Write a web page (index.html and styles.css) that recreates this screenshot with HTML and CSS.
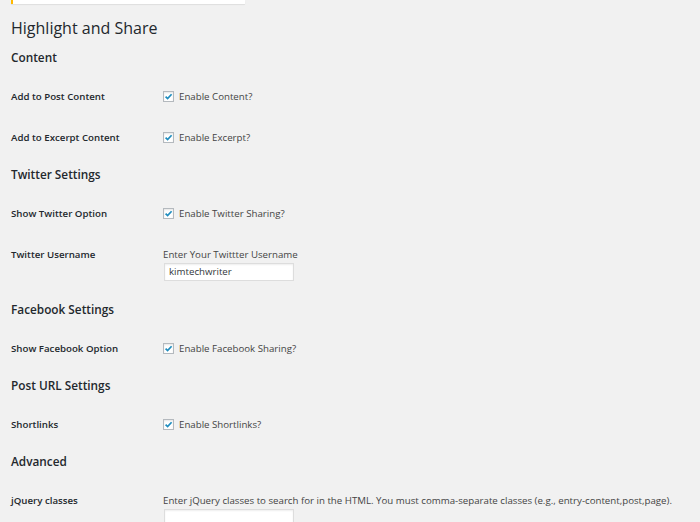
FILE: index.html
```html
<!DOCTYPE html>
<html>
<head>
<meta charset="utf-8">
<link rel="stylesheet" href="styles.css">
</head>
<body>
<div class="wrap">
  <div class="notice"></div>
  <h1 class="title">Highlight and Share</h1>

  <h2 class="section">Content</h2>
  <div class="row">
    <div class="th">Add to Post Content</div>
    <div class="td"><label class="check"><span class="cb"><svg viewBox="0 0 9 9"><path d="M1.6 4.6 L3.6 6.6 L7.6 2.2" /></svg></span>Enable Content?</label></div>
  </div>
  <div class="row">
    <div class="th">Add to Excerpt Content</div>
    <div class="td"><label class="check"><span class="cb"><svg viewBox="0 0 9 9"><path d="M1.6 4.6 L3.6 6.6 L7.6 2.2" /></svg></span>Enable Excerpt?</label></div>
  </div>

  <h2 class="section">Twitter Settings</h2>
  <div class="row">
    <div class="th">Show Twitter Option</div>
    <div class="td"><label class="check"><span class="cb"><svg viewBox="0 0 9 9"><path d="M1.6 4.6 L3.6 6.6 L7.6 2.2" /></svg></span>Enable Twitter Sharing?</label></div>
  </div>
  <div class="row row-input">
    <div class="th">Twitter Username</div>
    <div class="td">
      <div class="desc">Enter Your Twittter Username</div>
      <div class="input">kimtechwriter</div>
    </div>
  </div>

  <h2 class="section">Facebook Settings</h2>
  <div class="row">
    <div class="th">Show Facebook Option</div>
    <div class="td"><label class="check"><span class="cb"><svg viewBox="0 0 9 9"><path d="M1.6 4.6 L3.6 6.6 L7.6 2.2" /></svg></span>Enable Facebook Sharing?</label></div>
  </div>

  <h2 class="section">Post URL Settings</h2>
  <div class="row">
    <div class="th">Shortlinks</div>
    <div class="td"><label class="check"><span class="cb"><svg viewBox="0 0 9 9"><path d="M1.6 4.6 L3.6 6.6 L7.6 2.2" /></svg></span>Enable Shortlinks?</label></div>
  </div>

  <h2 class="section">Advanced</h2>
  <div class="row row-input">
    <div class="th">jQuery classes</div>
    <div class="td">
      <div class="desc">Enter jQuery classes to search for in the HTML. You must comma-separate classes (e.g., entry-content,post,page).</div>
      <div class="input"></div>
    </div>
  </div>
</div>
</body>
</html>
```
FILE: styles.css
```css
html, body {
  margin: 0;
  padding: 0;
  background: #f1f1f1;
  overflow: hidden;
}
body {
  font-family: "Open Sans", "Liberation Sans", sans-serif;
  color: #23282d;
  height: 522px;
}
.wrap {
  padding-left: 11px;
}
.notice {
  width: 232px;
  height: 4px;
  background: #fff;
  border-left: 2px solid #ffb900;
  box-shadow: 0 1px 1px rgba(0, 0, 0, 0.08);
}
.title {
  margin: 14px 0 0;
  font-size: 16px;
  line-height: 20px;
  font-weight: 400;
  color: #23282d;
}
.section {
  margin: 11px 0 11px;
  font-size: 11.8px;
  line-height: 16px;
  font-weight: 600;
  color: #23282d;
}
.row + .section {
  margin-top: 8px;
}
.row {
  display: flex;
  align-items: flex-start;
  padding: 14px 0;
}
.row-input {
  padding-bottom: 12px;
}
.th {
  width: 152px;
  flex: none;
  font-size: 9.7px;
  line-height: 13px;
  font-weight: 600;
  color: #23282d;
}
.td {
  font-size: 9.7px;
  line-height: 13px;
  color: #444;
}
.check {
  display: flex;
  align-items: center;
  height: 13px;
}
.cb {
  width: 9px;
  height: 9px;
  border: 1px solid #b4b9be;
  background: #fff;
  box-shadow: inset 0 1px 2px rgba(0, 0, 0, 0.1);
  margin-right: 5px;
  display: flex;
}
.cb svg {
  width: 9px;
  height: 9px;
  fill: none;
  stroke: #1e8cbe;
  stroke-width: 1.7;
}
.desc {
  color: #444;
}
.td .input {
  box-sizing: border-box;
  margin-top: 2px;
  margin-left: 1px;
  width: 130px;
  height: 18px;
  border: 1px solid #ddd;
  background: #fff;
  box-shadow: inset 0 1px 2px rgba(0, 0, 0, 0.07);
  font-size: 9.7px;
  line-height: 16px;
  padding-left: 4px;
  color: #32373c;
}
```
